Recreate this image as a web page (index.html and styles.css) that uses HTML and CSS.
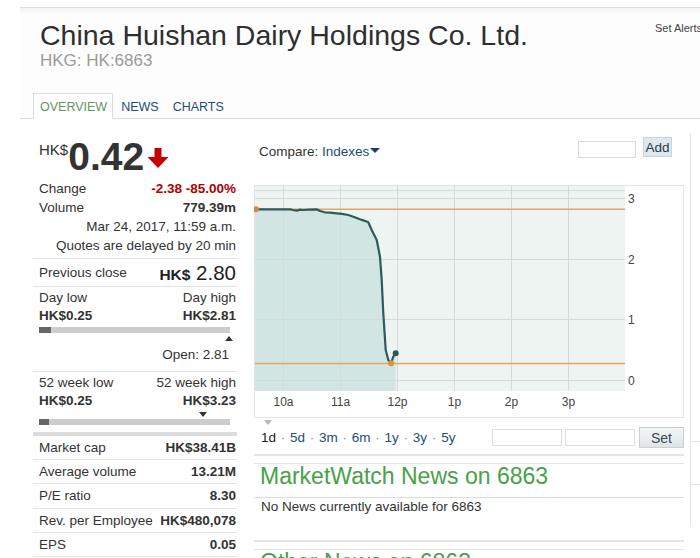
FILE: index.html
```html
<!DOCTYPE html>
<html lang="en">
<head>
<meta charset="utf-8">
<title>China Huishan Dairy Holdings Co. Ltd. - HKG: HK:6863</title>
<link rel="stylesheet" href="styles.css">
</head>
<body>
<div class="page">
  <header class="header">
    <div class="title-row">
      <div class="titles">
        <h1 class="company">China Huishan Dairy Holdings Co. Ltd.</h1>
        <div class="ticker">HKG: HK:6863</div>
      </div>
      <a class="alerts">Set Alerts</a>
    </div>
    <nav class="tabs">
      <span class="tab active">OVERVIEW</span>
      <span class="tab">NEWS</span>
      <span class="tab">CHARTS</span>
    </nav>
  </header>

  <main class="main">
    <section class="quote">
      <div class="summary">
        <div class="price-row">
          <span class="currency">HK$</span>
          <span class="price">0.42</span>
          <svg class="arrow" width="22" height="20" viewBox="0 0 22 20" aria-hidden="true">
            <path d="M7.5 0 H14.5 V9 H21.5 L11 20 L0.5 9 H7.5 Z" fill="#c40000"/>
          </svg>
        </div>
        <div class="row"><span>Change</span><b class="neg">-2.38 -85.00%</b></div>
        <div class="row"><span>Volume</span><b>779.39m</b></div>
        <div class="row right">Mar 24, 2017, 11:59 a.m.</div>
        <div class="row right">Quotes are delayed by 20 min</div>
      </div>

      <div class="prev">
        <span>Previous close</span>
        <span class="prev-val"><b>HK$</b> 2.80</span>
      </div>

      <div class="range">
        <div class="row"><span>Day low</span><span>Day high</span></div>
        <div class="row"><b>HK$0.25</b><b>HK$2.81</b></div>
        <div class="bar"><span class="bar-fill" style="width:12px"></span></div>
        <div class="marker-row"><span class="tri-up" style="margin-left:186px"></span></div>
        <div class="row right open">Open: 2.81</div>
      </div>

      <div class="range week">
        <div class="row"><span>52 week low</span><span>52 week high</span></div>
        <div class="row"><b>HK$0.25</b><b>HK$3.23</b></div>
        <div class="marker-row down"><span class="tri-down" style="margin-left:160px"></span></div>
        <div class="bar"><span class="bar-fill" style="width:10px"></span></div>
      </div>

      <div class="stats">
        <div class="stat"><span>Market cap</span><b>HK$38.41B</b></div>
        <div class="stat"><span>Average volume</span><b>13.21M</b></div>
        <div class="stat"><span>P/E ratio</span><b>8.30</b></div>
        <div class="stat"><span>Rev. per Employee</span><b>HK$480,078</b></div>
        <div class="stat"><span>EPS</span><b>0.05</b></div>
      </div>
    </section>

    <section class="chart-col">
      <div class="compare-row">
        <div class="compare">Compare: <span class="sel">Indexes</span><span class="caret"></span></div>
        <input class="cmp-input" type="text">
        <button class="add">Add</button>
      </div>

      <svg class="chart" width="430" height="233" viewBox="0 0 430 233">
        <rect x="0.5" y="0.5" width="429" height="232" fill="#fff" stroke="#e4e4e4"/>
        <rect x="1" y="1" width="370" height="205" fill="#eef4f1"/>
        <polygon fill="#d1e6e3" points="1,24.3 36,24.3 42.7,25.7 49,25 62.7,24.3 71,27.3 82.7,28.3 94.3,30 106,34.3 114.3,37.3 117.7,45 122.7,55 126,71.7 127.7,95 129.3,128.3 131.7,165 134.3,175 137,178.3 139.3,171.7 141.7,168.3 141.7,206 1,206"/>
        <g stroke="#d3dbd8" stroke-width="1">
          <line x1="1" y1="5.5" x2="371" y2="5.5"/>
          <line x1="1" y1="13.5" x2="371" y2="13.5"/>
          <line x1="1" y1="74.5" x2="371" y2="74.5"/>
          <line x1="1" y1="134.5" x2="371" y2="134.5"/>
          <line x1="1" y1="195.5" x2="371" y2="195.5"/>
          <line x1="29.5" y1="1" x2="29.5" y2="206"/>
          <line x1="86.5" y1="1" x2="86.5" y2="206"/>
          <line x1="143.5" y1="1" x2="143.5" y2="206"/>
          <line x1="200.5" y1="1" x2="200.5" y2="206"/>
          <line x1="257.5" y1="1" x2="257.5" y2="206"/>
          <line x1="314.5" y1="1" x2="314.5" y2="206"/>
        </g>
        <g stroke="#e2a467" stroke-width="1.4">
          <line x1="1" y1="24.3" x2="371" y2="24.3"/>
          <line x1="1" y1="178.5" x2="371" y2="178.5"/>
        </g>
        <polyline fill="none" stroke="#2c5b5c" stroke-width="2.2" stroke-linejoin="round" points="1,24.3 36,24.3 39,25 42.7,25.7 46,24.6 49,25 55,24.6 62.7,24.3 66,26 71,27.3 76,27.6 82.7,28.3 88,28.9 94.3,30 100,32 106,34.3 110,35.6 114.3,37.3 117.7,45 122.7,55 126,71.7 127.7,95 129.3,128.3 131.7,165 134.3,175 137,178.3 139.3,171.7 141.7,168.3"/>
        <circle cx="2" cy="24.3" r="3" fill="#c98b4d"/>
        <circle cx="137" cy="178.3" r="3" fill="#d9923f"/>
        <circle cx="141.7" cy="168.3" r="3" fill="#245a6b"/>
        <g class="axis" font-size="12" fill="#444">
          <text x="374" y="17.5">3</text>
          <text x="374" y="78.5">2</text>
          <text x="374" y="139">1</text>
          <text x="374" y="199.5">0</text>
          <g text-anchor="middle">
            <text x="29.5" y="220.5">10a</text>
            <text x="86.5" y="220.5">11a</text>
            <text x="143.5" y="220.5">12p</text>
            <text x="200.5" y="220.5">1p</text>
            <text x="257.5" y="220.5">2p</text>
            <text x="314.5" y="220.5">3p</text>
          </g>
        </g>
      </svg>

      <div class="controls">
        <div class="periods">
          <span class="cur">1d</span><span class="sep"> · </span><a>5d</a><span class="sep"> · </span><a>3m</a><span class="sep"> · </span><a>6m</a><span class="sep"> · </span><a>1y</a><span class="sep"> · </span><a>3y</a><span class="sep"> · </span><a>5y</a>
        </div>
        <input class="range-input first" type="text">
        <input class="range-input" type="text">
        <button class="set">Set</button>
      </div>

      <div class="news">
        <div class="news-head"><h2>MarketWatch News on 6863</h2></div>
        <p>No News currently available for 6863</p>
      </div>

      <div class="news other">
        <div class="news-head"><h2>Other News on 6863</h2></div>
      </div>
    </section>

    <aside class="sidebar">
      <div class="side-spacer"></div>
      <div class="side-row"></div>
      <div class="side-row"></div>
    </aside>
  </main>
</div>
</body>
</html>
```

FILE: styles.css
```css
html, body {
  margin: 0;
  padding: 0;
  overflow: hidden;
}

body {
  font-family: "Liberation Sans", Arial, sans-serif;
  color: #333;
  background: #fff;
}

.page {
  margin-left: 20px;
  width: 680px;
  height: 558px;
  overflow: hidden;
}

/* ---------- header ---------- */
.header {
  margin-top: 7px;
  border-top: 1px solid #dedede;
  background: linear-gradient(#f3f3f3, #fdfdfd 8px, #fdfdfd);
}

.title-row {
  width: 700px;
  box-sizing: border-box;
  display: flex;
  justify-content: space-between;
  align-items: flex-start;
  padding-top: 11px;
}

.titles {
  padding-left: 20px;
}

.company {
  margin: 0;
  font-size: 28.5px;
  line-height: 32px;
  font-weight: normal;
  color: #2f2f2f;
}

.ticker {
  font-size: 17px;
  line-height: 20px;
  color: #9a9a9a;
}

.alerts {
  margin-top: 3px;
  margin-right: 18px;
  font-size: 11px;
  line-height: 13px;
  color: #444;
}

.tabs {
  display: flex;
  margin-top: 22px;
  padding-left: 13px;
  border-bottom: 1px solid #dcdcdc;
}

.tab {
  font-size: 12.5px;
  line-height: 16px;
  padding: 5px 5px 3px 6px;
  border: 1px solid transparent;
  margin-bottom: -1px;
  margin-right: 1px;
  color: #1d4e79;
}

.tab.active {
  color: #5f965f;
  border-color: #dcdcdc;
  border-bottom-color: #fff;
  background: #fff;
}

/* ---------- main ---------- */
.main {
  display: flex;
  align-items: flex-start;
  padding-left: 13px;
}

.quote {
  width: 204px;
  flex: none;
  font-size: 13.5px;
}

.summary,
.prev,
.range,
.stat {
  padding: 0 1px 0 6px;
}

.summary {
  padding-bottom: 3px;
  border-bottom: 1px solid #e3e3e3;
}

.price-row {
  display: flex;
  align-items: flex-start;
  margin-top: 18px;
  margin-bottom: 3px;
}

.currency {
  font-size: 15px;
  line-height: 15px;
  margin-top: 5px;
  color: #333;
}

.price {
  font-size: 39px;
  line-height: 39px;
  font-weight: bold;
  color: #333;
}

.arrow {
  margin: 11px 0 0 3px;
}

.row {
  display: flex;
  justify-content: space-between;
  line-height: 19px;
}

.row.right {
  justify-content: flex-end;
}

.neg {
  color: #b00000;
}

.prev {
  height: 27px;
  display: flex;
  align-items: center;
  justify-content: space-between;
  border-bottom: 1px solid #e3e3e3;
}

.prev-val {
  font-size: 20.5px;
  color: #222;
}

.prev-val b {
  font-size: 15.5px;
}

.range {
  padding-top: 2px;
  padding-bottom: 7px;
  border-bottom: 1px solid #e3e3e3;
}

.range .row {
  line-height: 18px;
}

.bar {
  display: flex;
  margin-top: 2px;
  margin-right: 6px;
  height: 6px;
  background: #cdcdcd;
}

.bar-fill {
  background: #666;
}

.marker-row {
  display: flex;
  margin-top: 3px;
  height: 5px;
}

.marker-row.down {
  margin-top: 2px;
}

.tri-up {
  width: 0;
  height: 0;
  border-left: 4px solid transparent;
  border-right: 4px solid transparent;
  border-bottom: 5px solid #333;
}

.tri-down {
  width: 0;
  height: 0;
  border-left: 4px solid transparent;
  border-right: 4px solid transparent;
  border-top: 5px solid #333;
}

.row.open {
  margin-top: 5px;
  padding-right: 7px;
}

.range.week {
  border-bottom: 4px solid #dcdcdc;
}

.stat {
  display: flex;
  justify-content: space-between;
  line-height: 23.2px;
  border-bottom: 1px solid #e5e5e5;
}

/* ---------- chart column ---------- */
.chart-col {
  width: 430px;
  flex: none;
  margin-left: 17px;
}

.compare-row {
  display: flex;
  align-items: flex-start;
  height: 21px;
  margin-top: 18px;
}

.compare {
  margin: 5px 0 0 5px;
  font-size: 13.5px;
  line-height: 20px;
  color: #333;
}

.compare .sel {
  color: #1d4e79;
}

.caret {
  display: inline-block;
  width: 0;
  height: 0;
  margin-left: 1px;
  vertical-align: 3px;
  border-left: 5px solid transparent;
  border-right: 5px solid transparent;
  border-top: 5px solid #1d3d5e;
}

.cmp-input {
  margin: 4px 0 0 auto;
  width: 58px;
  height: 17px;
  box-sizing: border-box;
  border: 1px solid #dadada;
  padding: 0;
  background: #fff;
}

.add {
  margin: 0 12px 0 7px;
  width: 29px;
  height: 20px;
  padding: 0;
  box-sizing: border-box;
  font-family: "Liberation Sans", Arial, sans-serif;
  font-size: 13.5px;
  color: #2b3b4b;
  background: #dfe8ee;
  border: 1px solid #c9d4dc;
}

.chart {
  display: block;
  margin-top: 27px;
  font-family: "Liberation Sans", Arial, sans-serif;
}

.controls {
  position: relative;
  display: flex;
  align-items: center;
  height: 21px;
  margin-top: 9px;
}

.controls::before {
  content: "";
  position: absolute;
  left: 10px;
  top: -7px;
  border-left: 4px solid transparent;
  border-right: 4px solid transparent;
  border-top: 5px solid #b8b8b8;
}

.periods {
  padding-left: 7px;
  font-size: 13.5px;
  line-height: 18px;
  color: #1d4e79;
}

.periods .cur {
  color: #222;
}

.periods .sep {
  color: #888;
  padding: 0 1px;
}

.range-input {
  width: 70px;
  height: 17px;
  box-sizing: border-box;
  border: 1px solid #dedede;
  padding: 0;
  margin-left: 3px;
  background: #fff;
}

.range-input.first {
  margin-left: auto;
}

.set {
  margin-left: 4px;
  width: 45px;
  height: 21px;
  padding: 0;
  box-sizing: border-box;
  font-family: "Liberation Sans", Arial, sans-serif;
  font-size: 14px;
  color: #3a4a5a;
  background: linear-gradient(#f4f6f6, #dfe5e5);
  border: 1px solid #c9d0d2;
}

.news {
  margin-top: 6px;
  border-top: 2px solid #e4e4e4;
  padding-top: 7px;
}

.news.other {
  margin-top: 24px;
}

.news-head {
  border-top: 1px solid #e4e4e4;
  border-bottom: 1px solid #dcdcdc;
  padding-bottom: 9px;
}

.news h2 {
  margin: 0;
  padding-left: 6px;
  font-size: 23px;
  line-height: 24px;
  font-weight: normal;
  color: #47a247;
}

.news p {
  margin: 0;
  padding-left: 7px;
  font-size: 13.5px;
  line-height: 18px;
  color: #333;
}

/* ---------- sidebar ---------- */
.sidebar {
  flex: 1;
  margin-left: 6px;
  margin-top: 14px;
  border-left: 1px solid #e3e3e3;
}

.side-spacer {
  height: 308px;
}

.side-row {
  height: 42px;
  border-top: 1px solid #e3e3e3;
}
```
